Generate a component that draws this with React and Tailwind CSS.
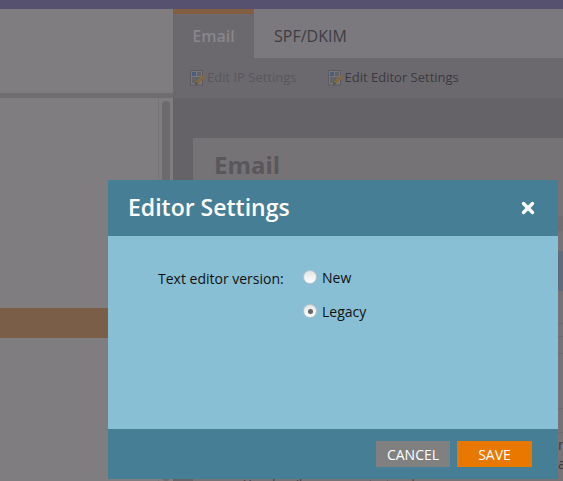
import { X } from 'lucide-react';

function NoteIcon() {
  return (
    <svg width="16" height="16" viewBox="0 0 16 16" className="shrink-0">
      <rect x="0.5" y="0.5" width="12" height="14.5" fill="#77767a" stroke="#5c5b60" />
      <rect x="2" y="2" width="4" height="4" fill="#4a5f7c" />
      <path d="M7 3h4M7 5h4M2 8h8M2 10h6M2 12h4" stroke="#4f4e54" strokeWidth="1" />
      <path d="M5 15l1-3 7-7 2 2-7 7z" fill="#84683a" />
      <path d="M5 15l1-3 2 2z" fill="#4c4a44" />
    </svg>
  );
}

function RadioRow({ label, checked }) {
  return (
    <div className="flex items-center gap-[5px] h-[20px]">
      <span className="flex w-[14px] h-[14px] items-center justify-center rounded-full bg-gradient-to-b from-[#e4e4e4] to-white border border-[#b5c5cc]">
        {checked && <span className="w-[5px] h-[5px] rounded-full bg-[#666]" />}
      </span>
      <span className="text-[14px] text-[#111]">{label}</span>
    </div>
  );
}

export default function App() {
  return (
    <div className="relative w-[563px] h-[481px] overflow-hidden flex flex-col bg-[#7f7d7f] font-['Open_Sans','Liberation_Sans',sans-serif]">
      <div className="h-[9px] shrink-0 bg-[#575170]" />

      <div className="flex flex-1 min-h-0">
        {/* left tree panel */}
        <div className="w-[173px] shrink-0 flex flex-col">
          <div className="h-[84px] shrink-0 bg-[#7f7d7f]" />
          <div className="h-[5px] shrink-0 bg-[#6f6d70]" />
          <div className="flex-1 min-h-0 flex flex-col relative">
            <div className="h-[210px] shrink-0" />
            <div className="h-[30px] shrink-0 bg-[#7a5e48]" />
            <div className="absolute top-0 right-0 bottom-0 w-[15px] border-l border-[#767477] flex justify-center pt-[3px]">
              <div className="w-[8px] h-full rounded-full bg-[#6c6a6d]" />
            </div>
          </div>
        </div>

        {/* main area */}
        <div className="flex-1 min-w-0 flex flex-col bg-[#656368]">
          <div className="flex h-[49px] shrink-0 bg-[#7b797d]">
            <div className="w-[81px] bg-[#6b696e] border-t-[5px] border-[#835f42] flex items-center justify-center text-[16px] font-semibold text-[#88868a]">
              Email
            </div>
            <div className="px-[20px] pt-[5px] flex items-center text-[16px] text-[#3f3d44]">SPF/DKIM</div>
          </div>
          <div className="h-[40px] shrink-0 bg-[#6b696e] flex items-center pl-[17px] text-[13px]">
            <div className="flex items-center gap-px text-[#59575d]">
              <NoteIcon />
              Edit IP Settings
            </div>
            <div className="flex items-center gap-px ml-[31px] text-[#3b393f]">
              <NoteIcon />
              Edit Editor Settings
            </div>
          </div>
          <div className="flex-1 min-h-0 pt-[40px] pl-[20px]">
            <div className="h-full overflow-hidden bg-[#757376] pl-[21px] pt-[9px]">
              <div className="text-[24px] leading-[36px] font-bold text-[#59575b]">Email</div>
              {/* bits of the page that show past the modal's right edge */}
              <div className="flex flex-col items-end mt-[33px]">
                <div className="h-[15px] w-[30px] bg-[#6f6d70]" />
                <div className="h-[40px] w-[30px] mt-[20px] bg-[#5f6b7b]" />
                <div className="h-px w-[30px] mt-[32px] bg-[#6c6a6d]" />
                <div className="h-px w-[30px] mt-[12px] bg-[#6c6a6d]" />
                <div className="h-px w-[30px] mt-[16px] bg-[#6c6a6d]" />
                <div className="h-px w-[30px] mt-[54px] bg-[#6c6a6d]" />
                <div className="h-px w-[30px] mt-[23px] bg-[#6c6a6d]" />
                <div className="w-[5px] mt-[2px] overflow-hidden text-[14px] leading-[19px] text-[#3d3b40]">m</div>
                <div className="w-[5px] overflow-hidden text-[14px] leading-[19px] text-[#3d3b40]">a</div>
              </div>
              <div className="mt-[5px] pl-[29px] whitespace-nowrap text-[12px] leading-[14px] text-[#3d3b40]">
                Unsubscribe message text and more
              </div>
            </div>
          </div>
        </div>
      </div>

      {/* modal */}
      <div className="absolute left-[108px] top-[180px] w-[450px] h-[299px] flex flex-col bg-[#88bfd4]">
        <div className="h-[56px] shrink-0 bg-[#467e95] flex items-center justify-between pl-[20px] pr-[21px]">
          <span className="text-[23px] font-semibold text-white pb-[1px]">Editor Settings</span>
          <X size={18} strokeWidth={4.5} className="text-white" />
        </div>
        <div className="flex-1 flex pt-[31px] pl-[50px]">
          <div className="w-[145px] text-[14px] leading-[22px] pt-[1px] text-[#111]">Text editor version:</div>
          <div className="flex flex-col gap-[14px]">
            <RadioRow label="New" />
            <RadioRow label="Legacy" checked />
          </div>
        </div>
        <div className="h-[50px] shrink-0 bg-[#467e95] flex justify-end gap-[7px] pt-[12px] pr-[26px]">
          <button className="w-[74px] h-[26px] bg-[#808080] text-white text-[14px] font-medium">CANCEL</button>
          <button className="w-[75px] h-[26px] bg-[#e87800] text-white text-[14px] font-medium">SAVE</button>
        </div>
      </div>
    </div>
  );
}
